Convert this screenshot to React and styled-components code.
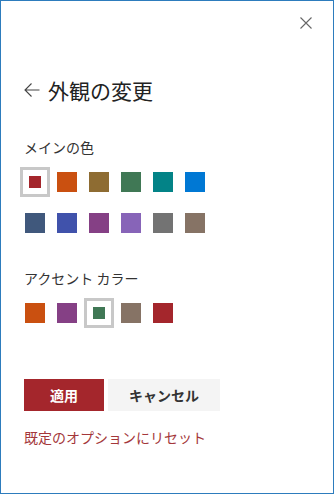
import React from "react";
import styled, { createGlobalStyle } from "styled-components";

const Global = createGlobalStyle`
  html, body { margin: 0; padding: 0; background: #fff; }
  body { font-family: "Noto Sans CJK JP", "Noto Sans", sans-serif; }
  * { box-sizing: border-box; }
`;

const Panel = styled.div`
  width: 334px;
  height: 494px;
  border: 1px solid #2d7cbd;
  background: #fff;
  display: flex;
  flex-direction: column;
`;

const TopBar = styled.div`
  display: flex;
  justify-content: flex-end;
  padding: 16px 21px 0 0;
`;

const CloseButton = styled.button`
  width: 12px;
  height: 12px;
  padding: 0;
  border: 0;
  background: none;
  display: flex;
  cursor: pointer;
`;

const Body = styled.div`
  padding: 0 23px;
  display: flex;
  flex-direction: column;
  align-items: flex-start;
`;

const TitleRow = styled.div`
  margin-top: 47px;
  display: flex;
  align-items: center;
  gap: 8px;
  height: 28px;
`;

const BackArrow = styled.svg`
  width: 16px;
  height: 16px;
  flex: none;
`;

const Title = styled.h1`
  margin: 0;
  font-size: 21px;
  font-weight: 400;
  line-height: 28px;
  color: #222;
`;

const Label = styled.div`
  margin-top: ${(p) => p.$mt}px;
  font-size: 14px;
  line-height: 20px;
  color: #333;
`;

const Grid = styled.div`
  margin: 10px 0 0 -4px;
  display: grid;
  grid-template-columns: repeat(6, 30px);
  column-gap: 2px;
  row-gap: 11px;
`;

const Cell = styled.div`
  width: 30px;
  height: 30px;
  display: flex;
  align-items: center;
  justify-content: center;
  background: #fff;
  border: ${(p) => (p.$selected ? "3px solid #c8c8c8" : "none")};
  cursor: pointer;
`;

const Swatch = styled.div`
  width: ${(p) => (p.$selected ? 12 : 20)}px;
  height: ${(p) => (p.$selected ? 12 : 20)}px;
  background: ${(p) => p.$color};
`;

const Buttons = styled.div`
  margin-top: 51px;
  display: flex;
  gap: 4px;
`;

const Button = styled.button`
  height: 32px;
  width: ${(p) => p.$w}px;
  border: 0;
  padding: 0;
  font-family: inherit;
  font-size: 14px;
  font-weight: 700;
  background: ${(p) => (p.$primary ? "#a4262c" : "#f4f4f4")};
  color: ${(p) => (p.$primary ? "#fff" : "#333")};
  cursor: pointer;
`;

const ResetLink = styled.a`
  margin-top: 16px;
  font-size: 14px;
  line-height: 20px;
  color: #a4373a;
  text-decoration: none;
  cursor: pointer;
`;

const mainColors = [
  "#a4262c", "#ca5010", "#8e6c32", "#407855", "#038387", "#0078d4",
  "#40587c", "#4052ab", "#854085", "#8764b8", "#737373", "#867365",
];
const accentColors = ["#ca5010", "#854085", "#407855", "#867365", "#a4262c"];

function SwatchGrid({ colors, selected }) {
  return (
    <Grid>
      {colors.map((c, i) => (
        <Cell key={i} $selected={i === selected}>
          <Swatch $color={c} $selected={i === selected} />
        </Cell>
      ))}
    </Grid>
  );
}

export default function App() {
  return (
    <>
      <Global />
      <Panel>
        <TopBar>
          <CloseButton aria-label="閉じる">
            <svg width="12" height="12" viewBox="0 0 12 12">
              <path d="M0.5 0.5 L11.5 11.5 M11.5 0.5 L0.5 11.5" stroke="#666" strokeWidth="1.1" fill="none" />
            </svg>
          </CloseButton>
        </TopBar>
        <Body>
          <TitleRow>
            <BackArrow viewBox="0 0 16 16">
              <path d="M15.5 8 H1 M7.5 1.5 L1 8 L7.5 14.5" stroke="#444" strokeWidth="1.1" fill="none" />
            </BackArrow>
            <Title>外観の変更</Title>
          </TitleRow>
          <Label $mt={33}>メインの色</Label>
          <SwatchGrid colors={mainColors} selected={0} />
          <Label $mt={30}>アクセント カラー</Label>
          <SwatchGrid colors={accentColors} selected={2} />
          <Buttons>
            <Button $primary $w={80}>適用</Button>
            <Button $w={112}>キャンセル</Button>
          </Buttons>
          <ResetLink>既定のオプションにリセット</ResetLink>
        </Body>
      </Panel>
    </>
  );
}
